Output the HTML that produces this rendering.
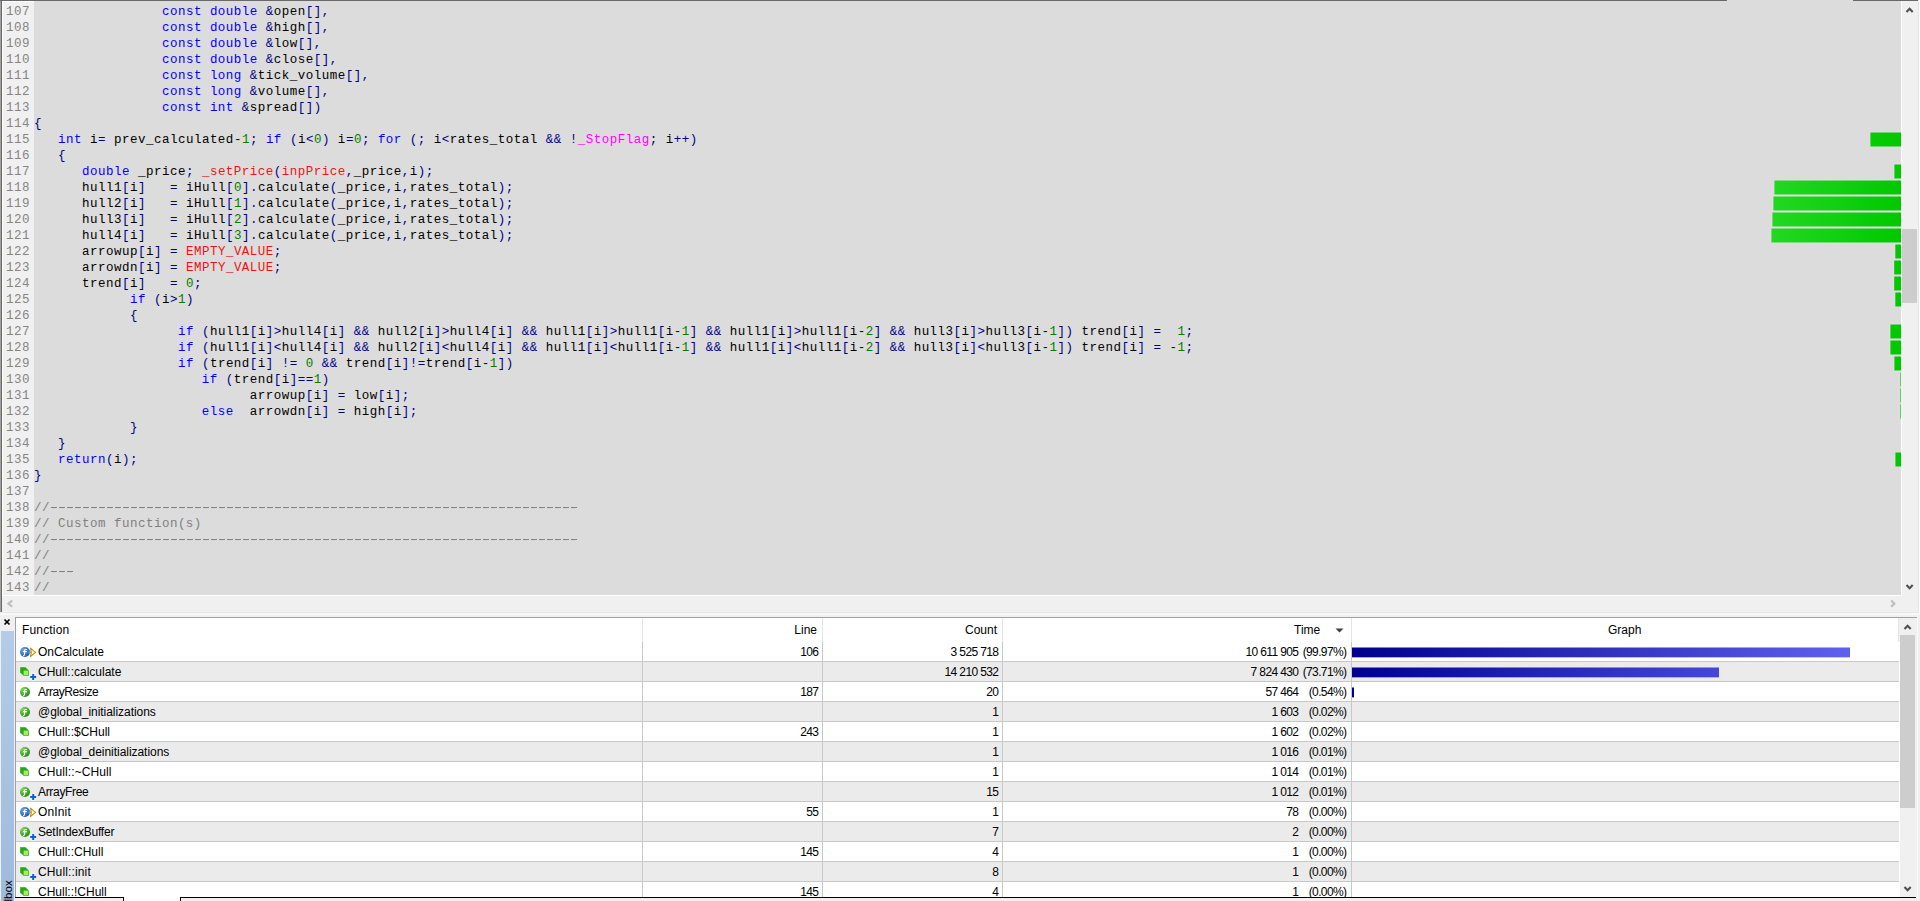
<!DOCTYPE html>
<html><head><meta charset="utf-8"><title>Profiler</title>
<style>
html,body{margin:0;padding:0}
body{width:1920px;height:901px;overflow:hidden;background:#f0f0f0;position:relative;font-family:"Liberation Sans",sans-serif}
div,span,pre,svg{position:absolute;box-sizing:border-box}
pre{margin:0;font-family:"Liberation Mono",monospace;font-size:12.5px;letter-spacing:0.492px;line-height:16px;white-space:pre}
/* editor */
#edbg{left:34px;top:1px;width:1867px;height:594px;background:#dcdcdc}
#gut{left:2px;top:1px;width:32px;height:594px;background:#f0f0f0;border-left:1px solid #fff;border-top:1px solid #fff}
#bl0{left:0;top:0;width:1px;height:612px;background:#a0a0a0}
#bl1{left:1px;top:0;width:1px;height:612px;background:#696969}
#bt0{left:0;top:0;width:1727px;height:1px;background:#696969}
#bt1{left:1853px;top:0;width:65px;height:1px;background:#696969}
#btg{left:1727px;top:0;width:126px;height:1px;background:#dcdcdc}
#nums{left:6px;top:4px;color:#858585}
#code{left:34px;top:4px;color:#000}
.k{position:static;color:#0000ff}.n{position:static;color:#008000}.r{position:static;color:#e81414}
.m{position:static;color:#ff00ff}.p{position:static;color:#000080}.c{position:static;color:#808080}
.dash{height:1px;background:repeating-linear-gradient(90deg,#848484 0,#848484 6px,transparent 6px,transparent 8px)}
.gb{height:14px;background:linear-gradient(90deg,#22d822,#00c800);background-size:130px 100%;background-position:right}
#vs{left:1901px;top:1px;width:17px;height:594px;background:#f0f0f0;border-left:1px solid #fff}
#vth{left:1902px;top:229px;width:15px;height:74px;background:#cdcdcd}
#vr{left:1918px;top:0;width:1px;height:613px;background:#e6e6e6}
#vr2{left:1919px;top:0;width:1px;height:613px;background:#fff}
#hl{left:0;top:612px;width:1919px;height:1px;background:#e6e6e6}
#hl2{left:0;top:613px;width:1920px;height:2px;background:#f8f8f8}
#tr{left:1917px;top:617px;width:1px;height:281px;background:#fafafa}
#hs{left:2px;top:595px;width:1916px;height:17px;background:#f0f0f0}
#wl{left:2px;top:595px;width:1900px;height:1px;background:#fff}
.arw{fill:none;stroke:#505050;stroke-width:2.1}
/* bottom panel */
#strip{left:1px;top:631px;width:13px;height:270px;background:linear-gradient(180deg,#b4cce8,#9ebadc)}
#tbl{left:15px;top:617px;width:1902px;height:281px;background:#fff;border-left:1px solid #a0a0a0;border-top:1px solid #a0a0a0}
#hdr{left:16px;top:618px;width:1883px;height:24px;font-size:12px;line-height:24px;color:#000}
#hdr span{top:0}
.hsep{top:618px;width:1px;height:24px;background:#e5e5e5}
.row{left:16px;width:1883px;height:20px;border-bottom:1px solid #c8c8c8;font-size:12px;line-height:21px;color:#000;background:#fff}
.row.alt{background:#ebebeb}
.row span{top:0;white-space:pre}
.vsep{top:642px;width:1px;height:255px;background:#c8c8c8}
.ic{left:3px;top:3px;width:18px;height:17px}
.fn{left:22px}
.ln,.ct,.tm,.pc{letter-spacing:-0.62px}
.ln{right:1080.6px}
.ct{right:900.6px}
.tm{right:600.6px}
.pc{right:552.6px}
.bb{left:1336px;top:5px;height:11px;-webkit-mask-image:linear-gradient(180deg,rgba(0,0,0,.5) 0,rgba(0,0,0,.5) 1px,#000 1px,#000 10px,rgba(0,0,0,.35) 10px);mask-image:linear-gradient(180deg,rgba(0,0,0,.5) 0,rgba(0,0,0,.5) 1px,#000 1px,#000 10px,rgba(0,0,0,.35) 10px);background:linear-gradient(90deg,#000090,#6464f5);background-size:520px 100%}
#ts{left:1899px;top:618px;width:18px;height:279px;background:#f0f0f0}
#tth{left:1900px;top:635px;width:15px;height:173px;background:#cdcdcd}
#tsw{left:1899px;top:642px;width:1px;height:255px;background:#fff}
#bot{left:15px;top:897px;width:1901px;height:1px;background:#000}
#botw{left:123px;top:897px;width:58px;height:4px;background:#fff;border-left:1px solid #000;border-right:1px solid #000}
#botf{left:15px;top:898px;width:1905px;height:3px;background:#f0f0f0}
</style></head><body>
<svg width="0" height="0" style="left:-10px"><defs>
<radialGradient id="gg" cx="35%" cy="30%" r="75%"><stop offset="0" stop-color="#7fe05a"/><stop offset="1" stop-color="#1f8a10"/></radialGradient>
<radialGradient id="bg" cx="35%" cy="30%" r="75%"><stop offset="0" stop-color="#6aa8f0"/><stop offset="1" stop-color="#1b55b8"/></radialGradient>
<g id="gf"><circle cx="6" cy="7" r="5" fill="url(#gg)"/><path d="M7.9 4.5 H6.4 Q5.6 4.5 5.6 5.4 V9.2 Q5.6 10.2 4.2 10.8 M4 6.6 H7.9" fill="none" stroke="#fff" stroke-width="1.15"/></g>
<g id="bf"><circle cx="6" cy="7" r="5" fill="url(#bg)"/><path d="M7.9 4.5 H6.4 Q5.6 4.5 5.6 5.4 V9.2 Q5.6 10.2 4.2 10.8 M4 6.6 H7.9" fill="none" stroke="#fff" stroke-width="1.15"/></g>
<g id="arr"><path d="M9.5 7.3 H12.5" stroke="#7fa8c8" stroke-width="1.6"/><path d="M11.5 3.1 L16.6 7.3 L11.5 11.5 L12.3 7.3 Z" fill="#fff8c8" stroke="#c8920e" stroke-width="1.1" stroke-linejoin="round"/></g>
<g id="cube"><path d="M1 2 L1 7.5 L4.5 11 L10 11 L10 5.5 L6.5 2 Z" fill="#27a814" stroke="#fff" stroke-opacity="0.6" stroke-width="0.6"/><rect x="4.6" y="5.6" width="4.6" height="4.6" fill="#a6ea6a"/></g>
<g id="plus"><path d="M14.2 8.6 V15.4 M10.8 12 H17.6" stroke="#fff" stroke-opacity="0.8" stroke-width="3" fill="none"/><path d="M14.2 9 V15 M11.2 12 H17.2" stroke="#0a60d8" stroke-width="2" fill="none"/></g>
</defs></svg>

<div id="edbg"></div><div id="gut"></div>
<div id="bl0"></div><div id="bl1"></div><div id="bt0"></div><div id="bt1"></div><div id="btg"></div>
<div class="dash" style="left:51px;top:507px;width:526px"></div><div class="dash" style="left:51px;top:539px;width:526px"></div><div class="dash" style="left:51px;top:571px;width:22px"></div>
<pre id="nums">107
108
109
110
111
112
113
114
115
116
117
118
119
120
121
122
123
124
125
126
127
128
129
130
131
132
133
134
135
136
137
138
139
140
141
142
143</pre>
<pre id="code">                <span class="k">const</span> <span class="k">double</span> <span class="p">&amp;</span>open<span class="p">[</span><span class="p">]</span><span class="p">,</span>
                <span class="k">const</span> <span class="k">double</span> <span class="p">&amp;</span>high<span class="p">[</span><span class="p">]</span><span class="p">,</span>
                <span class="k">const</span> <span class="k">double</span> <span class="p">&amp;</span>low<span class="p">[</span><span class="p">]</span><span class="p">,</span>
                <span class="k">const</span> <span class="k">double</span> <span class="p">&amp;</span>close<span class="p">[</span><span class="p">]</span><span class="p">,</span>
                <span class="k">const</span> <span class="k">long</span> <span class="p">&amp;</span>tick_volume<span class="p">[</span><span class="p">]</span><span class="p">,</span>
                <span class="k">const</span> <span class="k">long</span> <span class="p">&amp;</span>volume<span class="p">[</span><span class="p">]</span><span class="p">,</span>
                <span class="k">const</span> <span class="k">int</span> <span class="p">&amp;</span>spread<span class="p">[</span><span class="p">]</span><span class="p">)</span>
<span class="p">{</span>
   <span class="k">int</span> i<span class="p">=</span> prev_calculated<span class="p">-</span><span class="n">1</span><span class="p">;</span> <span class="k">if</span> <span class="p">(</span>i<span class="p">&lt;</span><span class="n">0</span><span class="p">)</span> i<span class="p">=</span><span class="n">0</span><span class="p">;</span> <span class="k">for</span> <span class="p">(</span><span class="p">;</span> i<span class="p">&lt;</span>rates_total <span class="p">&amp;</span><span class="p">&amp;</span> <span class="p">!</span><span class="m">_StopFlag</span><span class="p">;</span> i<span class="p">+</span><span class="p">+</span><span class="p">)</span>
   <span class="p">{</span>
      <span class="k">double</span> _price<span class="p">;</span> <span class="r">_setPrice</span><span class="p">(</span><span class="r">inpPrice</span><span class="p">,</span>_price<span class="p">,</span>i<span class="p">)</span><span class="p">;</span>
      hull1<span class="p">[</span>i<span class="p">]</span>   <span class="p">=</span> iHull<span class="p">[</span><span class="n">0</span><span class="p">]</span><span class="p">.</span>calculate<span class="p">(</span>_price<span class="p">,</span>i<span class="p">,</span>rates_total<span class="p">)</span><span class="p">;</span>
      hull2<span class="p">[</span>i<span class="p">]</span>   <span class="p">=</span> iHull<span class="p">[</span><span class="n">1</span><span class="p">]</span><span class="p">.</span>calculate<span class="p">(</span>_price<span class="p">,</span>i<span class="p">,</span>rates_total<span class="p">)</span><span class="p">;</span>
      hull3<span class="p">[</span>i<span class="p">]</span>   <span class="p">=</span> iHull<span class="p">[</span><span class="n">2</span><span class="p">]</span><span class="p">.</span>calculate<span class="p">(</span>_price<span class="p">,</span>i<span class="p">,</span>rates_total<span class="p">)</span><span class="p">;</span>
      hull4<span class="p">[</span>i<span class="p">]</span>   <span class="p">=</span> iHull<span class="p">[</span><span class="n">3</span><span class="p">]</span><span class="p">.</span>calculate<span class="p">(</span>_price<span class="p">,</span>i<span class="p">,</span>rates_total<span class="p">)</span><span class="p">;</span>
      arrowup<span class="p">[</span>i<span class="p">]</span> <span class="p">=</span> <span class="r">EMPTY_VALUE</span><span class="p">;</span>
      arrowdn<span class="p">[</span>i<span class="p">]</span> <span class="p">=</span> <span class="r">EMPTY_VALUE</span><span class="p">;</span>
      trend<span class="p">[</span>i<span class="p">]</span>   <span class="p">=</span> <span class="n">0</span><span class="p">;</span>
            <span class="k">if</span> <span class="p">(</span>i<span class="p">&gt;</span><span class="n">1</span><span class="p">)</span>
            <span class="p">{</span>
                  <span class="k">if</span> <span class="p">(</span>hull1<span class="p">[</span>i<span class="p">]</span><span class="p">&gt;</span>hull4<span class="p">[</span>i<span class="p">]</span> <span class="p">&amp;</span><span class="p">&amp;</span> hull2<span class="p">[</span>i<span class="p">]</span><span class="p">&gt;</span>hull4<span class="p">[</span>i<span class="p">]</span> <span class="p">&amp;</span><span class="p">&amp;</span> hull1<span class="p">[</span>i<span class="p">]</span><span class="p">&gt;</span>hull1<span class="p">[</span>i<span class="p">-</span><span class="n">1</span><span class="p">]</span> <span class="p">&amp;</span><span class="p">&amp;</span> hull1<span class="p">[</span>i<span class="p">]</span><span class="p">&gt;</span>hull1<span class="p">[</span>i<span class="p">-</span><span class="n">2</span><span class="p">]</span> <span class="p">&amp;</span><span class="p">&amp;</span> hull3<span class="p">[</span>i<span class="p">]</span><span class="p">&gt;</span>hull3<span class="p">[</span>i<span class="p">-</span><span class="n">1</span><span class="p">]</span><span class="p">)</span> trend<span class="p">[</span>i<span class="p">]</span> <span class="p">=</span>  <span class="n">1</span><span class="p">;</span>
                  <span class="k">if</span> <span class="p">(</span>hull1<span class="p">[</span>i<span class="p">]</span><span class="p">&lt;</span>hull4<span class="p">[</span>i<span class="p">]</span> <span class="p">&amp;</span><span class="p">&amp;</span> hull2<span class="p">[</span>i<span class="p">]</span><span class="p">&lt;</span>hull4<span class="p">[</span>i<span class="p">]</span> <span class="p">&amp;</span><span class="p">&amp;</span> hull1<span class="p">[</span>i<span class="p">]</span><span class="p">&lt;</span>hull1<span class="p">[</span>i<span class="p">-</span><span class="n">1</span><span class="p">]</span> <span class="p">&amp;</span><span class="p">&amp;</span> hull1<span class="p">[</span>i<span class="p">]</span><span class="p">&lt;</span>hull1<span class="p">[</span>i<span class="p">-</span><span class="n">2</span><span class="p">]</span> <span class="p">&amp;</span><span class="p">&amp;</span> hull3<span class="p">[</span>i<span class="p">]</span><span class="p">&lt;</span>hull3<span class="p">[</span>i<span class="p">-</span><span class="n">1</span><span class="p">]</span><span class="p">)</span> trend<span class="p">[</span>i<span class="p">]</span> <span class="p">=</span> <span class="p">-</span><span class="n">1</span><span class="p">;</span>
                  <span class="k">if</span> <span class="p">(</span>trend<span class="p">[</span>i<span class="p">]</span> <span class="p">!</span><span class="p">=</span> <span class="n">0</span> <span class="p">&amp;</span><span class="p">&amp;</span> trend<span class="p">[</span>i<span class="p">]</span><span class="p">!</span><span class="p">=</span>trend<span class="p">[</span>i<span class="p">-</span><span class="n">1</span><span class="p">]</span><span class="p">)</span>
                     <span class="k">if</span> <span class="p">(</span>trend<span class="p">[</span>i<span class="p">]</span><span class="p">=</span><span class="p">=</span><span class="n">1</span><span class="p">)</span>
                           arrowup<span class="p">[</span>i<span class="p">]</span> <span class="p">=</span> low<span class="p">[</span>i<span class="p">]</span><span class="p">;</span>
                     <span class="k">else</span>  arrowdn<span class="p">[</span>i<span class="p">]</span> <span class="p">=</span> high<span class="p">[</span>i<span class="p">]</span><span class="p">;</span>
            <span class="p">}</span>
   <span class="p">}</span>
   <span class="k">return</span><span class="p">(</span>i<span class="p">)</span><span class="p">;</span>
<span class="p">}</span>

<span class="c">//------------------------------------------------------------------</span>
<span class="c">// Custom function(s)</span>
<span class="c">//------------------------------------------------------------------</span>
<span class="c">//</span>
<span class="c">//---</span>
<span class="c">//</span></pre>
<svg style="left:0;top:0" width="1920" height="600" viewBox="0 0 1920 600"><defs><linearGradient id="grn" gradientUnits="userSpaceOnUse" x1="1771" y1="0" x2="1901" y2="0"><stop offset="0" stop-color="#22d822"/><stop offset="1" stop-color="#00c800"/></linearGradient></defs>
<rect x="1870.4" y="132.5" width="30.6" height="14" fill="url(#grn)" stroke="#e3dde5" stroke-width="2" paint-order="stroke"/>
<rect x="1894.4" y="164.5" width="6.6" height="14" fill="url(#grn)" stroke="#e3dde5" stroke-width="2" paint-order="stroke"/>
<rect x="1774.4" y="180.5" width="126.6" height="14" fill="url(#grn)" stroke="#e3dde5" stroke-width="2" paint-order="stroke"/>
<rect x="1773.4" y="196.5" width="127.6" height="14" fill="url(#grn)" stroke="#e3dde5" stroke-width="2" paint-order="stroke"/>
<rect x="1772.4" y="212.5" width="128.6" height="14" fill="url(#grn)" stroke="#e3dde5" stroke-width="2" paint-order="stroke"/>
<rect x="1771.4" y="228.5" width="129.6" height="14" fill="url(#grn)" stroke="#e3dde5" stroke-width="2" paint-order="stroke"/>
<rect x="1895.3" y="244.5" width="5.7" height="14" fill="url(#grn)" stroke="#e3dde5" stroke-width="2" paint-order="stroke"/>
<rect x="1894.2" y="260.5" width="6.8" height="14" fill="url(#grn)" stroke="#e3dde5" stroke-width="2" paint-order="stroke"/>
<rect x="1894.2" y="276.5" width="6.8" height="14" fill="url(#grn)" stroke="#e3dde5" stroke-width="2" paint-order="stroke"/>
<rect x="1895.3" y="292.5" width="5.7" height="14" fill="url(#grn)" stroke="#e3dde5" stroke-width="2" paint-order="stroke"/>
<rect x="1890.4" y="324.5" width="10.6" height="14" fill="url(#grn)" stroke="#e3dde5" stroke-width="2" paint-order="stroke"/>
<rect x="1890.4" y="340.5" width="10.6" height="14" fill="url(#grn)" stroke="#e3dde5" stroke-width="2" paint-order="stroke"/>
<rect x="1894.4" y="356.5" width="6.6" height="14" fill="url(#grn)" stroke="#e3dde5" stroke-width="2" paint-order="stroke"/>
<rect x="1900.4" y="372.5" width="0.6" height="14" fill="url(#grn)" stroke="#e3dde5" stroke-width="2" paint-order="stroke"/>
<rect x="1900.4" y="388.5" width="0.6" height="14" fill="url(#grn)" stroke="#e3dde5" stroke-width="2" paint-order="stroke"/>
<rect x="1900.4" y="404.5" width="0.6" height="14" fill="url(#grn)" stroke="#e3dde5" stroke-width="2" paint-order="stroke"/>
<rect x="1895.4" y="452.5" width="5.6" height="14" fill="url(#grn)" stroke="#e3dde5" stroke-width="2" paint-order="stroke"/>
</svg>
<div id="vs"></div><div id="vth"></div><div id="vr"></div><div id="vr2"></div><div id="hl"></div><div id="hl2"></div><div id="tr"></div>
<svg style="left:1905px;top:6px" width="10" height="8" viewBox="0 0 10 8"><path class="arw" d="M1.5 6 L4.6 2.7 L7.7 6"/></svg>
<svg style="left:1905px;top:583px" width="10" height="8" viewBox="0 0 10 8"><path class="arw" d="M1.5 2 L4.6 5.3 L7.7 2"/></svg>
<div id="hs"></div><div id="wl"></div>
<svg style="left:6px;top:599px" width="8" height="10" viewBox="0 0 8 10"><path class="arw" style="stroke:#bcbcbc" d="M6.2 1.6 L2.4 4.7 L6.2 7.8"/></svg>
<svg style="left:1889px;top:599px" width="8" height="10" viewBox="0 0 8 10"><path class="arw" style="stroke:#bcbcbc" d="M2.2 1.6 L5.4 4.7 L2.2 7.8"/></svg>

<svg style="left:3px;top:618px" width="9" height="9" viewBox="0 0 9 9"><path d="M1.5 1.5 L6.5 6.5 M6.5 1.5 L1.5 6.5" stroke="#000" stroke-width="1.7" fill="none"/></svg>
<div id="strip"></div>
<div style="left:-12px;top:893px;width:40px;height:14px;transform:rotate(-90deg);transform-origin:center;font-size:11.5px;line-height:14px;color:#000;text-align:left">Toolbox</div>
<div id="tbl"></div>
<div id="hdr"><span style="left:6px;letter-spacing:0.16px">Function</span><span style="right:1082px">Line</span><span style="right:902px">Count</span><span style="left:1278px">Time</span><span style="left:1592px">Graph</span>
<svg style="left:1319px;top:10px" width="9" height="5" viewBox="0 0 9 5"><path d="M0.5 0.5 H8.5 L4.5 4.5 Z" fill="#404040"/></svg></div>
<div class="hsep" style="left:642px"></div><div class="hsep" style="left:822px"></div><div class="hsep" style="left:1002px"></div><div class="hsep" style="left:1351px"></div><div class="hsep" style="left:1898px"></div>
<div class="row" style="top:642px"><svg class="ic" viewBox="0 0 18 17"><use href="#bf"/><use href="#arr"/></svg><span class="fn">OnCalculate</span><span class="ln">106</span><span class="ct">3 525 718</span><span class="tm">10 611 905</span><span class="pc">(99.97%)</span><div class="bb" style="width:498px"></div></div>
<div class="row alt" style="top:662px"><svg class="ic" viewBox="0 0 18 17"><use href="#cube"/><use href="#plus"/></svg><span class="fn">CHull::calculate</span><span class="ln"></span><span class="ct">14 210 532</span><span class="tm">7 824 430</span><span class="pc">(73.71%)</span><div class="bb" style="width:367px"></div></div>
<div class="row" style="top:682px"><svg class="ic" viewBox="0 0 18 17"><use href="#gf"/></svg><span class="fn" style="letter-spacing:-0.46px">ArrayResize</span><span class="ln">187</span><span class="ct">20</span><span class="tm">57 464</span><span class="pc">(0.54%)</span><div class="bb" style="width:2px"></div></div>
<div class="row alt" style="top:702px"><svg class="ic" viewBox="0 0 18 17"><use href="#gf"/></svg><span class="fn" style="letter-spacing:-0.05px">@global_initializations</span><span class="ln"></span><span class="ct">1</span><span class="tm">1 603</span><span class="pc">(0.02%)</span></div>
<div class="row" style="top:722px"><svg class="ic" viewBox="0 0 18 17"><use href="#cube"/></svg><span class="fn">CHull::$CHull</span><span class="ln">243</span><span class="ct">1</span><span class="tm">1 602</span><span class="pc">(0.02%)</span></div>
<div class="row alt" style="top:742px"><svg class="ic" viewBox="0 0 18 17"><use href="#gf"/></svg><span class="fn" style="letter-spacing:-0.04px">@global_deinitializations</span><span class="ln"></span><span class="ct">1</span><span class="tm">1 016</span><span class="pc">(0.01%)</span></div>
<div class="row" style="top:762px"><svg class="ic" viewBox="0 0 18 17"><use href="#cube"/></svg><span class="fn" style="letter-spacing:0.09px">CHull::~CHull</span><span class="ln"></span><span class="ct">1</span><span class="tm">1 014</span><span class="pc">(0.01%)</span></div>
<div class="row alt" style="top:782px"><svg class="ic" viewBox="0 0 18 17"><use href="#gf"/><use href="#plus"/></svg><span class="fn" style="letter-spacing:-0.32px">ArrayFree</span><span class="ln"></span><span class="ct">15</span><span class="tm">1 012</span><span class="pc">(0.01%)</span></div>
<div class="row" style="top:802px"><svg class="ic" viewBox="0 0 18 17"><use href="#bf"/><use href="#arr"/></svg><span class="fn" style="letter-spacing:0.15px">OnInit</span><span class="ln">55</span><span class="ct">1</span><span class="tm">78</span><span class="pc">(0.00%)</span></div>
<div class="row alt" style="top:822px"><svg class="ic" viewBox="0 0 18 17"><use href="#gf"/><use href="#plus"/></svg><span class="fn" style="letter-spacing:-0.21px">SetIndexBuffer</span><span class="ln"></span><span class="ct">7</span><span class="tm">2</span><span class="pc">(0.00%)</span></div>
<div class="row" style="top:842px"><svg class="ic" viewBox="0 0 18 17"><use href="#cube"/></svg><span class="fn">CHull::CHull</span><span class="ln">145</span><span class="ct">4</span><span class="tm">1</span><span class="pc">(0.00%)</span></div>
<div class="row alt" style="top:862px"><svg class="ic" viewBox="0 0 18 17"><use href="#cube"/><use href="#plus"/></svg><span class="fn" style="letter-spacing:0.14px">CHull::init</span><span class="ln"></span><span class="ct">8</span><span class="tm">1</span><span class="pc">(0.00%)</span></div>
<div class="row" style="top:882px"><svg class="ic" viewBox="0 0 18 17"><use href="#cube"/></svg><span class="fn">CHull::!CHull</span><span class="ln">145</span><span class="ct">4</span><span class="tm">1</span><span class="pc">(0.00%)</span></div>

<div class="vsep" style="left:642px"></div><div class="vsep" style="left:822px"></div><div class="vsep" style="left:1002px"></div><div class="vsep" style="left:1351px"></div>
<div id="ts"></div><div id="tsw"></div><div id="tth"></div>
<svg style="left:1903px;top:623px" width="10" height="8" viewBox="0 0 10 8"><path class="arw" d="M1.5 6 L4.6 2.7 L7.7 6"/></svg>
<svg style="left:1903px;top:885px" width="10" height="8" viewBox="0 0 10 8"><path class="arw" d="M1.5 2 L4.6 5.3 L7.7 2"/></svg>
<div id="botf"></div><div id="bot"></div><div id="botw"></div>
</body></html>
